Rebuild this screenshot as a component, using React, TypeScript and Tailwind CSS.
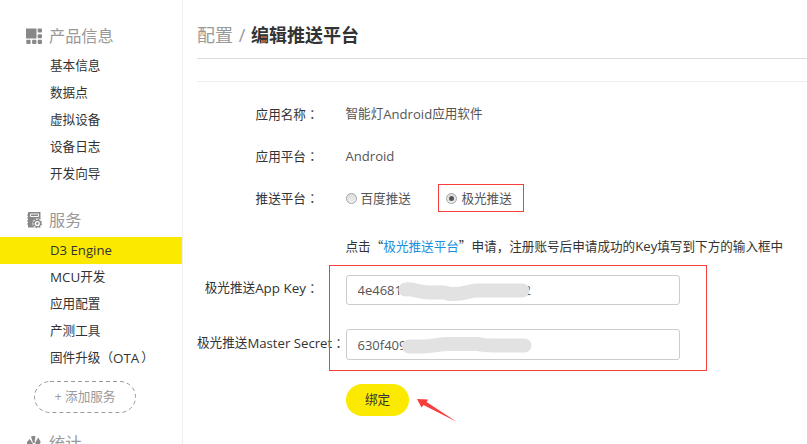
import type { ReactNode } from "react";

const cjk = "font-['Noto_Sans_CJK_SC',sans-serif]";

function Colon() {
  return <span className="font-['Noto_Sans_CJK_TC',sans-serif]">：</span>;
}

function MenuHeading({ icon, children }: { icon: ReactNode; children: ReactNode }) {
  return (
    <div className="flex h-[34px] items-center pl-[26px] text-[16.2px] text-[#999]">
      <span className="flex w-[23px] shrink-0">{icon}</span>
      {children}
    </div>
  );
}

function MenuItem({ children, active = false }: { children: ReactNode; active?: boolean }) {
  return (
    <li
      className={`flex h-[27px] items-center pb-[2px] pl-[50px] whitespace-nowrap text-[#333] ${
        active ? "bg-[#fbea00]" : ""
      }`}
    >
      {children}
    </li>
  );
}

function Row({ label, className, children }: { label?: string; className: string; children: ReactNode }) {
  return (
    <div className={`flex items-center ${className}`}>
      <div className="flex w-[121.5px] shrink-0 justify-end whitespace-nowrap text-[#333]">
        {label && (
          <span>
            {label}
            <Colon />
          </span>
        )}
      </div>
      <div className="ml-[27px] flex items-center whitespace-nowrap text-[#555]">{children}</div>
    </div>
  );
}

function Radio({ checked = false }: { checked?: boolean }) {
  return (
    <span className="mr-[4px] flex size-[11px] shrink-0 items-center justify-center rounded-full border border-[#a5a5a5] bg-linear-to-b from-[#ddd] to-[#f0f0f0]">
      {checked && <span className="size-[5px] rounded-full bg-[#555]" />}
    </span>
  );
}

const BlocksIcon = () => (
  <svg width="17" height="17" viewBox="0 0 17 17" fill="#888">
    <rect x="0" y="0.5" width="10.5" height="10" />
    <rect x="11.7" y="0.5" width="4.3" height="4" rx="1" />
    <rect x="11.7" y="6.2" width="4.3" height="4" rx="1" />
    <rect x="0.3" y="11.8" width="4.3" height="4.2" rx="1" />
    <rect x="6.1" y="11.8" width="4.3" height="4.2" rx="1" />
    <rect x="11.7" y="11.8" width="4.3" height="4.2" rx="1" />
  </svg>
);

const ServiceIcon = () => (
  <svg width="17" height="18" viewBox="0 0 17 18" fill="none">
    <path d="M2 1H14.500V16.500H2Z" fill="#888" />
    <path d="M1 4H4M1 7H4M1 10H4M1 13H4" stroke="#888" />
    <path d="M4.500 3H12.500V5.500H4.500Z" stroke="#fff" strokeWidth="0.9" />
    <circle cx="11.3" cy="12.5" r="4.900" fill="#fff" />
    <circle cx="11.3" cy="12.5" r="4" stroke="#888" strokeWidth="1.600" strokeDasharray="1.6 1.54" />
    <circle cx="11.3" cy="12.5" r="3.200" stroke="#888" strokeWidth="1.200" />
    <circle cx="11.3" cy="12.5" r="1.200" fill="#888" />
  </svg>
);

const StatsIcon = () => (
  <svg width="17" height="17" viewBox="0 0 17 17" fill="#888">
    <path d="M5 1.500L7.500 0.800L9.500 1.500L8.500 8H7Z" />
    <path d="M1 7L3.800 4L7 9L1 13Z" />
    <path d="M9 8L12.200 2.500L14.500 6.500L13.500 12Z" />
  </svg>
);

function SecretInput({ value }: { value: string }) {
  return (
    <input
      readOnly
      defaultValue={value}
      className="h-full w-[334px] rounded-[3px] border border-[#ccc] bg-white px-[10.5px] text-[13px] text-[#555] outline-none"
    />
  );
}

export default function App() {
  return (
    <div className="relative flex h-[444px] w-[807px] overflow-hidden bg-white font-['Open_Sans','Noto_Sans_CJK_SC',sans-serif] text-[12.6px] leading-[18px]">
      <aside className="w-[183px] shrink-0 border-r border-[#eee] pt-[19px]">
        <MenuHeading icon={<BlocksIcon />}>产品信息</MenuHeading>
        <ul>
          <MenuItem>基本信息</MenuItem>
          <MenuItem>数据点</MenuItem>
          <MenuItem>虚拟设备</MenuItem>
          <MenuItem>设备日志</MenuItem>
          <MenuItem>开发向导</MenuItem>
        </ul>
        <div className="mt-[15px]">
          <MenuHeading icon={<ServiceIcon />}>服务</MenuHeading>
        </div>
        <ul>
          <MenuItem active>
            <span className="text-[13.2px]">D3 Engine</span>
          </MenuItem>
          <MenuItem>
            <span className="text-[13.4px]">MCU</span>开发
          </MenuItem>
          <MenuItem>应用配置</MenuItem>
          <MenuItem>产测工具</MenuItem>
          <MenuItem>
            固件升级（<span className="mr-[2px] text-[13.4px]">OTA</span>）
          </MenuItem>
        </ul>
        <div className="mt-[9px] ml-[34px]">
          <svg width="102" height="32" className="absolute" fill="none">
            <rect x="0.5" y="0.5" width="101" height="31" rx="15.5" stroke="#999" strokeDasharray="4 3" />
          </svg>
          <button className="flex h-[32px] w-[102px] items-center justify-center pb-[1px] text-[#999]">
            +&nbsp;添加服务
          </button>
        </div>
        <div className="mt-[13px]">
          <MenuHeading icon={<StatsIcon />}>统计</MenuHeading>
        </div>
      </aside>

      <main className="ml-[14px] flex-1">
        <h1 className="flex h-[59px] items-center border-b border-[#ddd] pt-[12px] text-[18px] whitespace-pre text-[#999]">
          配置<span className="ml-[1px]"> / </span>
          <span className="ml-[1px] font-bold text-[#333]">编辑推送平台</span>
        </h1>
        <div className="h-[23px] border-b border-[#eee]" />

        <Row label="应用名称" className="mt-[11px] h-[42px]">
          智能灯<span className="text-[13.1px]">Android</span>应用软件
        </Row>
        <Row label="应用平台" className="h-[42px]">
          <span className="text-[13.1px]">Android</span>
        </Row>
        <Row label="推送平台" className="h-[43px]">
          <label className="flex items-center"><Radio />百度推送</label>
          <label className="ml-[35.5px] flex items-center"><Radio checked />极光推送</label>
        </Row>
        <Row className="mt-[17px] h-[18px]">
          <span className="text-[#333]">
            点击<span className={cjk}>“</span>
            <a className="text-[#1a8fe0]">极光推送平台</a>
            <span className={cjk}>”</span>申请，注册账号后申请成功的<span className="text-[13.2px]">Key</span>填写到下方的输入框中
          </span>
        </Row>

        <div className="mt-[20px] flex h-[30px]">
          <div className="flex h-[25px] w-[121.5px] shrink-0 items-center justify-end whitespace-nowrap text-[#333]">
            极光推送<span className="text-[13.4px]">App Key</span>
            <Colon />
          </div>
          <div className="ml-[27.5px]">
            <SecretInput value={"4e4681" + "\u00a0".repeat(36) + "2"} />
          </div>
        </div>
        <div className="mt-[24px] flex h-[31px]">
          <div className="flex h-[27px] w-[121.5px] shrink-0 items-center whitespace-nowrap text-[#333]">
            极光推送<span className="text-[13.2px]">Master Secret</span>
            <Colon />
          </div>
          <div className="ml-[27.5px]"><SecretInput value="630f409" /></div>
        </div>
        <button className="mt-[24px] ml-[149px] flex h-[32px] w-[63px] items-center justify-center rounded-full bg-[#fbea00] pb-[1px] text-[#333]">
          绑定
        </button>
      </main>

      <svg className="pointer-events-none absolute inset-0" width="807" height="444" fill="none">
        <path
          d="M405.500 289.500C412 288 417 292 428 292.500C438 293 443 291 449 294C464 295 469 290.500 477 290.500H522.500"
          stroke="#e2e2e2"
          strokeWidth="14"
          strokeLinecap="round"
          strokeLinejoin="round"
        />
        <path
          d="M409 346.500H424C434 346 438 344 450 344H478C484 345.500 488 345.500 493 345.500H524.500"
          stroke="#e2e2e2"
          strokeWidth="14"
          strokeLinecap="round"
          strokeLinejoin="round"
        />
        <rect x="438.500" y="184.500" width="85" height="27" stroke="#f93c3c" />
        <rect x="329.500" y="265.500" width="377" height="105" stroke="#f93c3c" />
        <path d="M417 399L428 399.500L426.500 402L457 422L423.500 405L421.500 407.500Z" fill="#f93c3c" />
      </svg>
    </div>
  );
}
